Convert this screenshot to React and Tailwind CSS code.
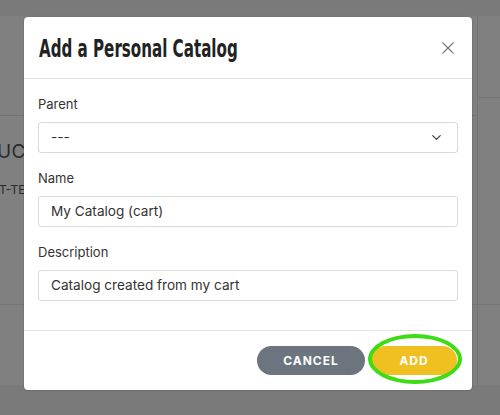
import { X, ChevronDown } from 'lucide-react';

const bodyFont = { fontFamily: '"Inter", "DejaVu Sans", sans-serif' };

function Field({ label, children }) {
    return (
        <div className="flex flex-col">
            <label className="text-[13px] text-[#333] leading-none mb-[11px]">{label}</label>
            {children}
        </div>
    );
}

function Backdrop() {
    return (
        <div className="flex flex-col h-full w-full">
            <div className="h-[16px] bg-[#7a7a7a]" />
            <div className="flex flex-1">
                <div className="flex flex-col w-[477px]">
                    <div className="h-[99px]" />
                    <div className="border-t border-[#747474] h-[189px] pt-[22px] text-[#2a2a2a]">
                        <div className="w-[24px] overflow-hidden">
                            <div className="text-[19px] ml-[-3px] tracking-wide whitespace-nowrap">UC</div>
                            <div className="text-[12px] ml-[-1px] mt-[14px] whitespace-nowrap">T-TE</div>
                        </div>
                    </div>
                    <div className="border-t border-[#747474] flex-1" />
                </div>
                <div className="flex flex-col flex-1 border-l border-[#747474]">
                    <div className="h-[81px]" />
                    <div className="border-t border-[#747474] h-[207px]" />
                    <div className="border-t border-[#747474] flex-1" />
                </div>
            </div>
            <div className="h-[30px] bg-[#7a7a7a]" />
        </div>
    );
}

export default function App() {
    return (
        <div className="relative w-[500px] h-[415px] bg-[#808080] overflow-hidden" style={bodyFont}>
            <Backdrop />

            {/* Modal */}
            <div className="absolute left-[24px] top-[17px] w-[448px] h-[373px] bg-white rounded-[4px] flex flex-col shadow-[0_0_2px_rgba(0,0,0,0.3)]">
                <div className="h-[62px] border-b border-[#e3e3e3] flex items-center justify-between pl-[15px] pr-[14px]">
                    <h2
                        className="text-[24px] font-bold text-[#222] origin-left scale-x-[0.7] whitespace-nowrap pt-[2px]"
                        style={{ fontFamily: '"DejaVu Sans Condensed", "DejaVu Sans", sans-serif' }}
                    >
                        Add a Personal Catalog
                    </h2>
                    <X size={20} strokeWidth={1.3} className="text-[#777]" />
                </div>

                <div className="flex-1 border-b border-[#e3e3e3] px-[14px] pt-[19px] flex flex-col gap-[19px]">
                    <Field label="Parent">
                        <div className="h-[31px] border border-[#d9d9d9] rounded-[3px] flex items-center justify-between pl-[12px] pr-[13px] text-[13.6px] text-[#333]">
                            <span>---</span>
                            <ChevronDown size={15} strokeWidth={1.8} className="text-[#333]" />
                        </div>
                    </Field>
                    <Field label="Name">
                        <div className="h-[31px] border border-[#d9d9d9] rounded-[3px] flex items-center pl-[12px] text-[13.6px] text-[#333]">
                            My Catalog (cart)
                        </div>
                    </Field>
                    <Field label="Description">
                        <div className="h-[31px] border border-[#d9d9d9] rounded-[3px] flex items-center pl-[12px] text-[13.6px] text-[#333]">
                            Catalog created from my cart
                        </div>
                    </Field>
                </div>

                <div className="h-[59px] flex items-center justify-end gap-[6px] pr-[15px]">
                    <button className="w-[108px] h-[29px] rounded-full bg-[#6c757d] text-white text-[12px] font-bold tracking-[0.08em]">
                        CANCEL
                    </button>
                    <div className="relative">
                        <button className="w-[86px] h-[29px] rounded-full bg-[#f0c020] text-white text-[12px] font-bold tracking-[0.08em]">
                            ADD
                        </button>
                        <div className="absolute left-[-3px] right-[-5px] top-[-12px] bottom-[-9px] rounded-[50%] border-[4px] border-[#3ddc14]" />
                    </div>
                </div>
            </div>
        </div>
    );
}
